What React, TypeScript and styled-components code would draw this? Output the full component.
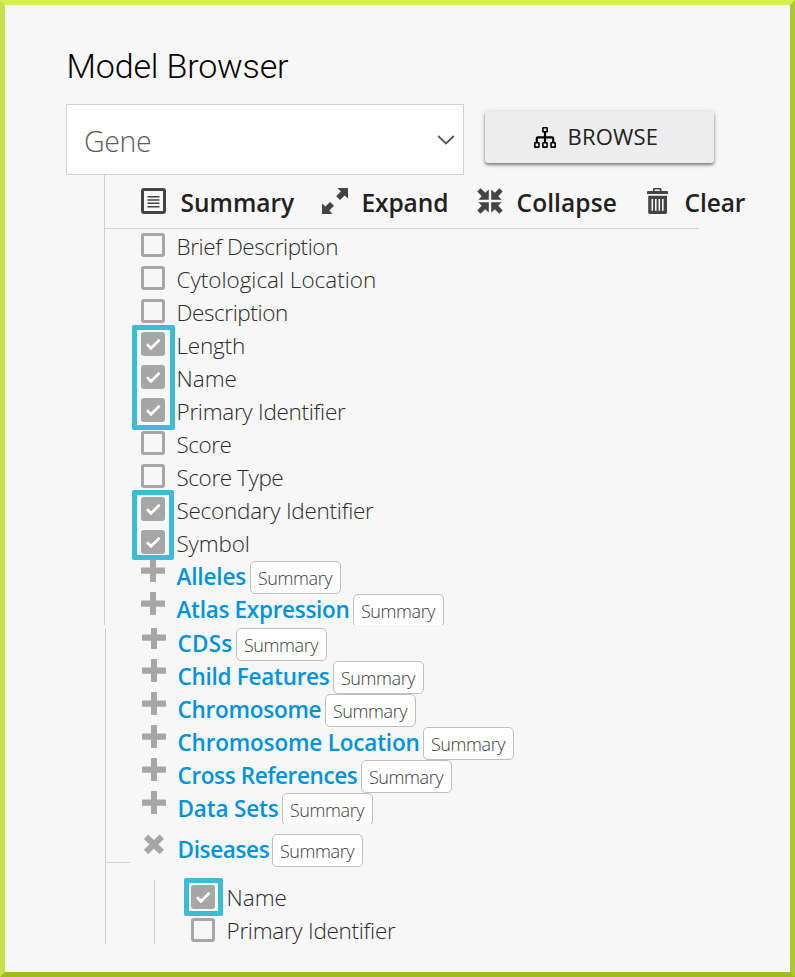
import React from 'react';
import styled, { createGlobalStyle } from 'styled-components';

const GlobalStyle = createGlobalStyle`
  * { box-sizing: border-box; }
  body { margin: 0; background: #f7f7f7; font-family: 'Open Sans', 'Noto Sans', sans-serif; }
`;

const Frame = styled.main`
  width: 795px;
  height: 977px;
  border: 5px solid;
  border-color: #d4ef56 #aec92e #a2bb20 #c7e248;
  background: #f7f7f7;
  overflow: hidden;
`;

const Title = styled.h1`
  margin: 39px 0 0 61.5px;
  height: 44px;
  font: 300 34px/44px Roboto, sans-serif;
  letter-spacing: -0.15px;
  color: #000;
`;

const Controls = styled.div`
  display: flex;
  align-items: flex-start;
  margin: 16px 0 0 61px;
`;

const Select = styled.div`
  display: flex;
  align-items: center;
  justify-content: space-between;
  width: 398px;
  height: 71px;
  padding: 2px 8px 0 17px;
  border: 1px solid #d2d2d2;
  background: #fff;
  color: #5c5c5c;
  font-size: 28.5px;
  font-weight: 300;
  letter-spacing: -0.4px;
  svg { margin-top: -2px; }
`;

const BrowseButton = styled.button`
  display: flex;
  align-items: center;
  width: 229px;
  height: 52px;
  margin: 7px 0 0 21px;
  padding: 0 0 0 49px;
  border: 0;
  border-radius: 3px;
  background: #ededed;
  box-shadow: 0 2px 3px rgba(0, 0, 0, 0.42), 0 1px 6px rgba(0, 0, 0, 0.15);
  color: #212121;
  font: 500 22px/50px 'Open Sans', sans-serif;
  letter-spacing: 0.2px;
  span { height: 52px; margin-left: 11.5px; }
`;

const Tree = styled.section<{ $left: number; $height: number; $gap?: number }>`
  margin: ${p => p.$gap ?? 0}px 0 0 ${p => p.$left}px;
  height: ${p => p.$height}px;
  border-left: 1px solid #cfcfcf;
`;

const Toolbar = styled.nav`
  display: flex;
  width: 594px;
  height: 54px;
  padding-left: 36px;
  border-bottom: 1px solid #d2d2d2;
`;

const Tool = styled.div<{ $width: number; $gap: number; $spacing: number; $weight: number }>`
  display: flex;
  align-items: flex-start;
  flex: 0 0 ${p => p.$width}px;
  gap: ${p => p.$gap}px;
  padding-top: 13px;
  color: #212121;
  font-size: 24.5px;
  font-weight: ${p => p.$weight};
  letter-spacing: ${p => p.$spacing}px;
  line-height: 30px;
  svg { flex: none; }
`;

const Rows = styled.div<{ $height: number; $shift?: number }>`
  height: ${p => p.$height}px;
  overflow: hidden;
  > :first-child { margin-top: ${p => p.$shift ?? 0}px; }
`;

const Row = styled.div<{ $indent?: number }>`
  display: flex;
  align-items: flex-start;
  height: 33px;
  padding-left: ${p => p.$indent ?? 36}px;
  svg { flex: none; }
`;

const FieldName = styled.span<{ $spacing: number }>`
  margin-left: 11.5px;
  padding-top: 1px;
  color: #2b2b2b;
  font-size: 22.5px;
  font-weight: 300;
  letter-spacing: ${p => p.$spacing}px;
  line-height: 33px;
  white-space: nowrap;
`;

const ClassName = styled.a<{ $spacing: number; $width: number }>`
  flex: 0 0 ${p => p.$width}px;
  margin-left: 11px;
  padding: 1px 0 0 0.5px;
  color: #0093dd;
  font-size: 22.5px;
  font-weight: 600;
  letter-spacing: ${p => p.$spacing}px;
  line-height: 33px;
  white-space: nowrap;
`;

const Tag = styled.span`
  width: 91px;
  height: 33px;
  margin-top: 2px;
  padding-right: 1px;
  border: 1px solid #bfbfbf;
  border-radius: 5px;
  background: #fff;
  color: #3a3a3a;
  font-size: 18px;
  font-weight: 300;
  letter-spacing: -0.4px;
  line-height: 33px;
  text-align: center;
`;

const Box = styled.span<{ $checked?: boolean; $top?: number }>`
  display: flex;
  align-items: center;
  justify-content: center;
  flex: none;
  width: 24px;
  height: 24px;
  margin-top: ${p => p.$top ?? 4}px;
  border: 3px solid #a6a6a6;
  border-radius: 3px;
  background: ${p => (p.$checked ? '#a6a6a6' : 'transparent')};
`;

const Outlined = styled.div`
  position: relative;
`;

const Highlight = styled.div<{ $top: number; $left: number; $width: number; $height: number }>`
  position: absolute;
  z-index: 1;
  top: ${p => p.$top}px;
  left: ${p => p.$left}px;
  width: ${p => p.$width}px;
  height: ${p => p.$height}px;
  border: 5px solid #3cbcd6;
  border-radius: 2px;
`;

const Branch = styled.div`
  width: 23px;
  height: 1px;
  margin: -3px 0 0 1px;
  background: #d2d2d2;
`;

const Nested = styled.div`
  position: relative;
  height: 64px;
  margin: 17px 0 0 48px;
  border-left: 1px solid #cfcfcf;
`;

const Check = () => (
  <svg width="18" height="18" viewBox="0 0 18 18" fill="none" stroke="#fff" strokeWidth="2.8">
    <path d="M3 9.2 7 13.2 15.6 4.8" />
  </svg>
);

const Plus = () => (
  <svg width="24" height="23" viewBox="0 0 24 23" fill="#a6a6a6">
    <rect x="9" width="6" height="23" rx=".7" />
    <rect y="8.5" width="24" height="6.3" rx=".7" />
  </svg>
);

const Cross = () => (
  <svg width="24" height="25" viewBox="0 0 24 25" stroke="#a6a6a6" strokeWidth="6.2">
    <path d="M4 4.8 19.8 20M19.8 4.8 4 20" />
  </svg>
);

const Chevron = () => (
  <svg width="18" height="12" viewBox="0 0 18 12" fill="none" stroke="#555" strokeWidth="1.8">
    <path d="M1.2 2 9 9.4 16.8 2" />
  </svg>
);

const Sitemap = () => (
  <svg width="22" height="21" viewBox="0 0 22 21" fill="none" stroke="#000" strokeWidth="1.6">
    <rect x="8.9" y=".8" width="4.3" height="4" rx=".4" />
    <rect x=".8" y="15.8" width="4.2" height="4.3" rx=".4" />
    <rect x="8.9" y="15.8" width="4.2" height="4.3" rx=".4" />
    <rect x="17" y="15.8" width="4.2" height="4.3" rx=".4" />
    <path d="M11 5V16M2.8 16V11.5Q2.8 10.3 4 10.3H18Q19.2 10.3 19.2 11.5V16" strokeWidth="2.2" />
  </svg>
);

const ListIcon = () => (
  <svg width="25" height="26" viewBox="0 0 25 26" fill="none" stroke="#444">
    <rect x="1.5" y="1.5" width="22" height="23" rx="1.5" strokeWidth="3" />
    <path d="M6.5 8.7H18.5M6.5 12H18.5M6.5 15.3H18.5M6.5 18.7H18.5" strokeWidth="1.5" />
  </svg>
);

const ExpandIcon = () => (
  <svg width="26" height="26" viewBox="0 0 26 26" fill="#444">
    <path d="M15.5 0H26V10.5L22.7 7.4 18 12 14.2 8.2 18.8 3.5Z" />
    <path d="M0 15.5 3.4 18.6 8.1 14 12 17.8 7.3 22.5 10.5 26H0Z" />
  </svg>
);

const CollapseIcon = () => (
  <svg width="26" height="26" viewBox="0 0 26 26" fill="#444">
    <path d="M11.8 1.4V11.8H1.4L4.7 8.2.3 3.6 3.6.3 8.2 4.7Z" />
    <path d="M14.2 1.4V11.8H24.6L21.3 8.2 25.7 3.6 22.4.3 17.8 4.7Z" />
    <path d="M11.8 24.6V14.2H1.4L4.7 17.8.3 22.4 3.6 25.7 8.2 21.3Z" />
    <path d="M14.2 24.6V14.2H24.6L21.3 17.8 25.7 22.4 22.4 25.7 17.8 21.3Z" />
  </svg>
);

const TrashIcon = () => (
  <svg width="21" height="26" viewBox="0 0 21 26" fill="#444">
    <path d="M6 3V1.2Q6 0 7.2 0H13.3Q14.5 0 14.5 1.2V3H20Q21 3 21 4V6H0V4Q0 3 1 3ZM7.7 3H12.8V1.6H7.7Z" fillRule="evenodd" />
    <path d="M1.2 7.8H20V24.3Q20 26 18.3 26H3Q1.2 26 1.2 24.3Z" />
    <path d="M5.3 11V22.7M8.8 11V22.7M12.3 11V22.7M15.8 11V22.7" stroke="#f7f7f7" strokeWidth="1.6" />
  </svg>
);

type FieldData = { name: string; spacing: number; checked?: boolean };

const fields: FieldData[] = [
  { name: 'Brief Description', spacing: -0.42 },
  { name: 'Cytological Location', spacing: -0.02 },
  { name: 'Description', spacing: -0.4 },
  { name: 'Length', spacing: -0.2, checked: true },
  { name: 'Name', spacing: 0, checked: true },
  { name: 'Primary Identifier', spacing: -0.28, checked: true },
  { name: 'Score', spacing: -0.5 },
  { name: 'Score Type', spacing: -0.42 },
  { name: 'Secondary Identifier', spacing: -0.26, checked: true },
  { name: 'Symbol', spacing: -0.15, checked: true },
];

type ClassData = { name: string; spacing: number; width: number };

const upperClasses: ClassData[] = [
  { name: 'Alleles', spacing: -0.15, width: 74 },
  { name: 'Atlas Expression', spacing: -0.3, width: 177 },
];

const lowerClasses: ClassData[] = [
  { name: 'CDSs', spacing: 0.25, width: 59 },
  { name: 'Child Features', spacing: -0.27, width: 156 },
  { name: 'Chromosome', spacing: -0.25, width: 148 },
  { name: 'Chromosome Location', spacing: -0.18, width: 246 },
  { name: 'Cross References', spacing: -0.38, width: 184 },
  { name: 'Data Sets', spacing: -0.18, width: 105 },
];

const Field = ({ item, indent, top }: { item: FieldData; indent?: number; top?: number }) => (
  <Row $indent={indent}>
    <Box $checked={item.checked} $top={top}>{item.checked && <Check />}</Box>
    <FieldName $spacing={item.spacing}>{item.name}</FieldName>
  </Row>
);

const ClassRow = ({ item, open }: { item: ClassData; open?: boolean }) => (
  <Row>
    {open ? <Cross /> : <Plus />}
    <ClassName $spacing={item.spacing} $width={item.width}>{item.name}</ClassName>
    <Tag>Summary</Tag>
  </Row>
);

export default function App() {
  return (
    <>
      <GlobalStyle />
      <Frame>
        <Title>Model Browser</Title>
        <Controls>
          <Select>Gene<Chevron /></Select>
          <BrowseButton><Sitemap /><span>BROWSE</span></BrowseButton>
        </Controls>
        <Tree $left={99} $height={450}>
          <Toolbar>
            <Tool $width={181} $gap={14.5} $spacing={0} $weight={600}><ListIcon />Summary</Tool>
            <Tool $width={155} $gap={13.5} $spacing={-0.1} $weight={550}><ExpandIcon />Expand</Tool>
            <Tool $width={170} $gap={13.5} $spacing={0.1} $weight={550}><CollapseIcon />Collapse</Tool>
            <Tool $width={110} $gap={16.5} $spacing={-0.1} $weight={550}><TrashIcon />Clear</Tool>
          </Toolbar>
          <Outlined>
            <Highlight $top={96} $left={27} $width={43} $height={105} />
            <Highlight $top={261} $left={27} $width={42} $height={70} />
            <Rows $height={396}>
              {fields.map(f => <Field key={f.name} item={f} />)}
              {upperClasses.map(c => <ClassRow key={c.name} item={c} />)}
            </Rows>
          </Outlined>
        </Tree>
        <Tree $left={100} $height={316} $gap={3}>
          <Rows $height={204} $shift={-2}>
            <Rows $height={198}>
              {lowerClasses.map(c => <ClassRow key={c.name} item={c} />)}
            </Rows>
          </Rows>
          <ClassRow item={{ name: 'Diseases', spacing: -0.35, width: 95 }} open />
          <Branch />
          <Nested>
            <Highlight $top={-2} $left={29} $width={39} $height={38} />
            <Field item={{ name: 'Name', spacing: 0, checked: true }} indent={36} top={5} />
            <Field item={{ name: 'Primary Identifier', spacing: -0.28 }} indent={36} top={5} />
          </Nested>
        </Tree>
      </Frame>
    </>
  );
}
